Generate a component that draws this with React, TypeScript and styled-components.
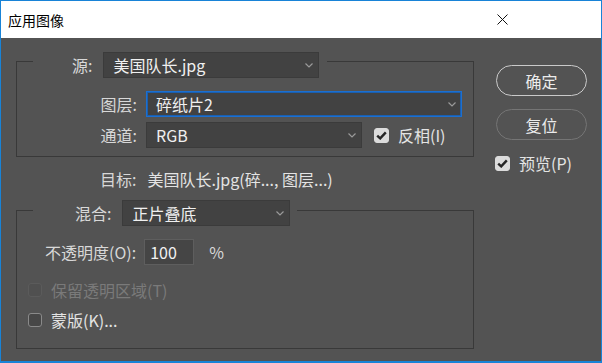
import React from "react";
import styled, { createGlobalStyle } from "styled-components";

const GlobalStyle = createGlobalStyle`
  html, body {
    margin: 0;
    padding: 0;
    background: #535353;
  }
  body {
    font-family: "Noto Sans CJK SC", "Noto Sans", sans-serif;
  }
`;

const Window = styled.div`
  width: 602px;
  height: 363px;
  box-sizing: border-box;
  border: 1px solid #1883d7;
  border-bottom-width: 2px;
  display: flex;
  flex-direction: column;
  background: #535353;
  overflow: hidden;
`;

const TitleBar = styled.div`
  height: 37px;
  background: #ffffff;
  display: flex;
  align-items: center;
  justify-content: space-between;
  padding: 0 0 0 7px;
  flex-shrink: 0;
`;

const Title = styled.div`
  font-size: 14px;
  color: #000000;
  line-height: 20px;
`;

const CloseButton = styled.div`
  width: 46px;
  height: 37px;
  display: flex;
  align-items: center;
  justify-content: center;
  margin-right: 76px;
`;

const Body = styled.div`
  flex: 1;
  display: flex;
  padding: 7px 0 0 15px;
  font-size: 16px;
  color: #d6d6d6;
`;

const MainColumn = styled.div`
  width: 458px;
  display: flex;
  flex-direction: column;
`;

const SideColumn = styled.div`
  width: 91px;
  margin-left: 22px;
  padding-top: 20px;
  display: flex;
  flex-direction: column;
`;

const Group = styled.fieldset<{ $padBottom: number }>`
  margin: 0;
  padding: 0 0 ${({ $padBottom }) => $padBottom}px 0;
  min-width: 0;
  border: 1px solid #393939;
`;

const Legend = styled.legend<{ $padTop: number; $padLeft: number; $padRight: number }>`
  margin-left: 16px;
  padding: ${({ $padTop }) => $padTop}px ${({ $padRight }) => $padRight}px 0
    ${({ $padLeft }) => $padLeft}px;
  display: flex;
  align-items: center;
  gap: 11px;
`;

const Label = styled.span<{ $dim?: boolean }>`
  color: ${({ $dim }) => ($dim ? "#7a7a7a" : "#d8d8d8")};
  line-height: 20px;
  white-space: nowrap;
`;

const SelectBox = styled.div<{ $w: number; $focus?: boolean }>`
  width: ${({ $w }) => $w}px;
  height: 26px;
  box-sizing: border-box;
  background: #424242;
  border: 1px solid ${({ $focus }) => ($focus ? "#1b6fd1" : "#3b3b3b")};
  box-shadow: ${({ $focus }) => ($focus ? "0 0 0 1px #1b5fae inset" : "none")};
  display: flex;
  align-items: center;
  justify-content: space-between;
  padding: 0 5px 0 9px;
  color: #f0f0f0;
`;

const SourceGrid = styled.div`
  display: grid;
  grid-template-columns: 121px 216px 92px;
  column-gap: 8px;
  row-gap: 5px;
  margin-top: 13px;
  align-items: center;
`;

const RowLabel = styled(Label)`
  text-align: right;
  padding-right: 1px;
`;

const Wide = styled.div`
  grid-column: 2 / 4;
`;

const CheckRow = styled.label<{ $gap: number; $offset?: number }>`
  display: flex;
  align-items: center;
  gap: ${({ $gap }) => $gap}px;
  height: 20px;
  margin-left: ${({ $offset }) => $offset ?? 0}px;
`;

const Box = styled.span<{ $checked?: boolean; $disabled?: boolean }>`
  width: ${({ $checked }) => ($checked ? 15 : 14)}px;
  height: ${({ $checked }) => ($checked ? 15 : 14)}px;
  box-sizing: border-box;
  border-radius: 3px;
  display: inline-flex;
  align-items: center;
  justify-content: center;
  background: ${({ $checked, $disabled }) =>
    $checked ? "#dcdcdc" : $disabled ? "#505050" : "#474747"};
  border: 1px solid
    ${({ $checked, $disabled }) =>
      $checked ? "#dcdcdc" : $disabled ? "#5b5b5b" : "#8a8a8a"};
  flex-shrink: 0;
`;

const TargetRow = styled.div`
  display: flex;
  gap: 11px;
  padding-left: 84px;
  margin: 12px 0 5px;
  line-height: 20px;
`;

const Value = styled.span`
  color: #e4e4e4;
`;

const BlendBody = styled.div`
  display: flex;
  flex-direction: column;
  padding-left: 11px;
`;

const OpacityRow = styled.div`
  display: flex;
  align-items: center;
  margin: 13px 0 15px 17px;
`;

const NumberField = styled.div`
  width: 50px;
  height: 26px;
  box-sizing: border-box;
  margin-left: 8px;
  background: #454545;
  border: 1px solid #5e5e5e;
  display: flex;
  align-items: center;
  padding-left: 5px;
  color: #f2f2f2;
`;

const Percent = styled.span`
  margin-left: 15px;
  color: #d8d8d8;
`;

const CheckList = styled.div`
  display: flex;
  flex-direction: column;
  gap: 10px;
`;

const PillButton = styled.div<{ $primary?: boolean }>`
  height: 31px;
  box-sizing: border-box;
  border-radius: 16px;
  border: 1.5px solid ${({ $primary }) => ($primary ? "#cacaca" : "#757575")};
  display: flex;
  align-items: center;
  justify-content: center;
  color: #ececec;
  font-size: 16px;
  margin-bottom: 13px;
`;

const Chevron = () => (
  <svg width="8" height="5" viewBox="0 0 8 5">
    <polyline points="0.5,0.5 4,4 7.5,0.5" fill="none" stroke="#9a9a9a" strokeWidth="1.2" />
  </svg>
);

const Tick = () => (
  <svg width="11" height="9" viewBox="0 0 11 9">
    <polyline points="1.2,4.6 4.2,7.4 9.8,1.4" fill="none" stroke="#262626" strokeWidth="2.4" />
  </svg>
);

const Dropdown = ({ w, text, focus }: { w: number; text: string; focus?: boolean }) => (
  <SelectBox $w={w} $focus={focus}>
    <span>{text}</span>
    <Chevron />
  </SelectBox>
);

const Check = ({
  label,
  checked,
  disabled,
  gap = 9,
  offset,
}: {
  label: string;
  checked?: boolean;
  disabled?: boolean;
  gap?: number;
  offset?: number;
}) => (
  <CheckRow $gap={gap} $offset={offset}>
    <Box $checked={checked} $disabled={disabled}>
      {checked && <Tick />}
    </Box>
    <Label $dim={disabled} style={disabled ? undefined : { color: "#e4e4e4" }}>
      {label}
    </Label>
  </CheckRow>
);

export default function App() {
  return (
    <>
      <GlobalStyle />
      <Window>
        <TitleBar>
          <Title>应用图像</Title>
          <CloseButton>
            <svg width="11" height="11" viewBox="0 0 11 11">
              <path d="M0.5 0.5 L10.5 10.5 M10.5 0.5 L0.5 10.5" stroke="#111" strokeWidth="1" />
            </svg>
          </CloseButton>
        </TitleBar>
        <Body>
          <MainColumn>
            <Group $padBottom={8}>
              <Legend $padTop={7} $padLeft={39} $padRight={8}>
                <Label>源:</Label>
                <Dropdown w={216} text="美国队长.jpg" />
              </Legend>
              <SourceGrid>
                <RowLabel>图层:</RowLabel>
                <Wide>
                  <Dropdown w={316} text="碎纸片2" focus />
                </Wide>
                <RowLabel>通道:</RowLabel>
                <Dropdown w={216} text="RGB" />
                <Check label="反相(I)" checked gap={9} offset={4} />
              </SourceGrid>
            </Group>

            <TargetRow>
              <Label>目标:</Label>
              <Value>美国队长.jpg(碎..., 图层...)</Value>
            </TargetRow>

            <Group $padBottom={18}>
              <Legend $padTop={6} $padLeft={42} $padRight={7}>
                <Label>混合:</Label>
                <Dropdown w={168} text="正片叠底" />
              </Legend>
              <BlendBody>
                <OpacityRow>
                  <Label>不透明度(O):</Label>
                  <NumberField>100</NumberField>
                  <Percent>%</Percent>
                </OpacityRow>
                <CheckList>
                  <Check label="保留透明区域(T)" disabled />
                  <Check label="蒙版(K)..." />
                </CheckList>
              </BlendBody>
            </Group>
          </MainColumn>

          <SideColumn>
            <PillButton $primary>确定</PillButton>
            <PillButton>复位</PillButton>
            <Check label="预览(P)" checked gap={9} offset={-1} />
          </SideColumn>
        </Body>
      </Window>
    </>
  );
}
